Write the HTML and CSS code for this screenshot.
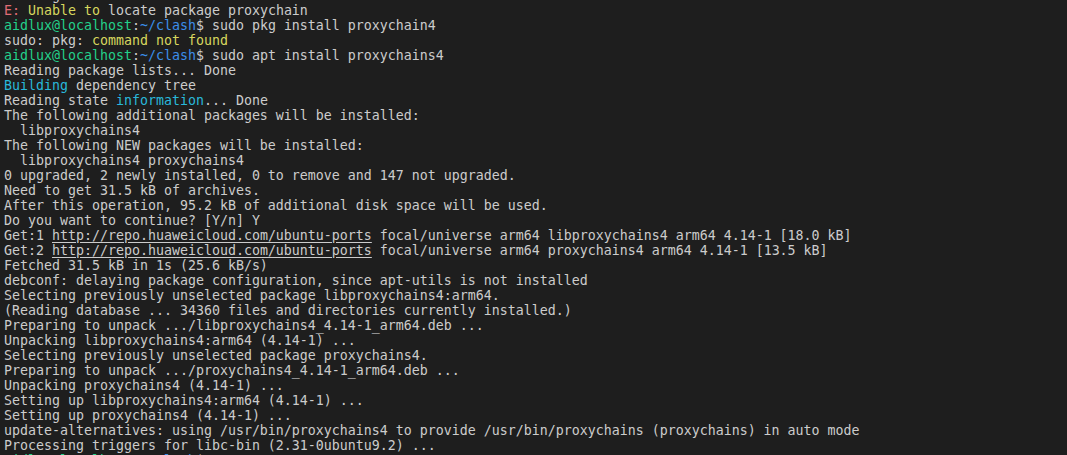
FILE: index.html
```html
<!DOCTYPE html>
<html lang="en">
<head>
    <meta charset="UTF-8">
    <meta name="viewport" content="width=device-width, initial-scale=1.0">
    <title>Terminal</title>
    <link rel="stylesheet" href="styles.css">
</head>
<body>
<pre class="terminal">Reading state <span class="cyan">information</span>... Done
<span class="red">E:</span> <span class="yellow">Unable to</span> locate package proxychain
<span class="green">aidlux@localhost</span>:<span class="blue">~/clash</span>$ sudo pkg install proxychain4
sudo: pkg: <span class="yellow">command not found</span>
<span class="green">aidlux@localhost</span>:<span class="blue">~/clash</span>$ sudo apt install proxychains4
Reading package lists... Done
<span class="cyan">Building</span> dependency tree
Reading state <span class="cyan">information</span>... Done
The following additional packages will be installed:
  libproxychains4
The following NEW packages will be installed:
  libproxychains4 proxychains4
0 upgraded, 2 newly installed, 0 to remove and 147 not upgraded.
Need to get 31.5 kB of archives.
After this operation, 95.2 kB of additional disk space will be used.
Do you want to continue? [Y/n] Y
Get:1 <span class="link">http://repo.huaweicloud.com/ubuntu-ports</span> focal/universe arm64 libproxychains4 arm64 4.14-1 [18.0 kB]
Get:2 <span class="link">http://repo.huaweicloud.com/ubuntu-ports</span> focal/universe arm64 proxychains4 arm64 4.14-1 [13.5 kB]
Fetched 31.5 kB in 1s (25.6 kB/s)
debconf: delaying package configuration, since apt-utils is not installed
Selecting previously unselected package libproxychains4:arm64.
(Reading database ... 34360 files and directories currently installed.)
Preparing to unpack .../libproxychains4_4.14-1_arm64.deb ...
Unpacking libproxychains4:arm64 (4.14-1) ...
Selecting previously unselected package proxychains4.
Preparing to unpack .../proxychains4_4.14-1_arm64.deb ...
Unpacking proxychains4 (4.14-1) ...
Setting up libproxychains4:arm64 (4.14-1) ...
Setting up proxychains4 (4.14-1) ...
update-alternatives: using /usr/bin/proxychains4 to provide /usr/bin/proxychains (proxychains) in auto mode
Processing triggers for libc-bin (2.31-0ubuntu9.2) ...
<span class="green">aidlux@localhost</span>:<span class="blue">~/clash</span>$ </pre>
</body>
</html>
```

FILE: styles.css
```css
html, body {
    margin: 0;
    padding: 0;
    height: 100%;
    background: #1e1e1e;
    overflow: hidden;
}

.terminal {
    margin: -12.5px 0 0 0;
    padding: 0 0 0 4px;
    font-family: 'DejaVu Sans Mono', monospace;
    font-size: 13.29px;
    line-height: 15.03px;
    color: #cccccc;
    white-space: pre;
}

.red {
    color: #e06c75;
}

.yellow {
    color: #d7d75f;
}

.green {
    color: #23d18b;
}

.blue {
    color: #3b8eea;
}

.cyan {
    color: #29b8db;
}

.link {
    text-decoration: underline;
    text-underline-offset: 2px;
}
```
